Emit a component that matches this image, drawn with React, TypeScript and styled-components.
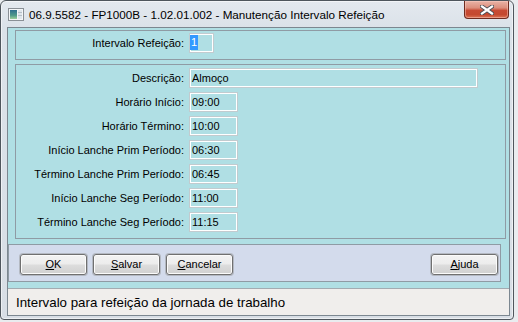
import React from "react";
import styled, { createGlobalStyle } from "styled-components";

const Global = createGlobalStyle`
  html, body { margin: 0; padding: 0; background: #e9ecef; }
  body { font-family: "Liberation Sans", Arial, sans-serif; }
  #root { width: 518px; height: 322px; }
`;

const Window = styled.div`
  box-sizing: border-box;
  width: 514px;
  height: 320px;
  border: 1px solid #4f565d;
  border-radius: 6px 6px 4px 4px;
  background: linear-gradient(180deg, #e4e9ef 0px, #dbe2e9 26px, #d8dee5 100%);
  box-shadow: inset 0 0 0 1px rgba(255, 255, 255, 0.55);
  display: flex;
  flex-direction: column;
  overflow: hidden;
`;

const TitleBar = styled.div`
  height: 26px;
  display: flex;
  align-items: center;
  padding-left: 7px;
  flex-shrink: 0;
`;

const TitleIcon = styled.svg`
  width: 16px;
  height: 13px;
  flex-shrink: 0;
`;

const TitleText = styled.span`
  margin-left: 5px;
  font-size: 11.7px;
  color: #000;
  white-space: nowrap;
`;

const CloseButton = styled.div`
  box-sizing: border-box;
  align-self: flex-start;
  margin-left: auto;
  margin-right: 4px;
  width: 45px;
  height: 18px;
  border: 1px solid #6e2b1f;
  border-top: none;
  border-radius: 0 0 4px 4px;
  background: linear-gradient(
    180deg,
    #e9b3a6 0%,
    #dc8f7d 40%,
    #c74a33 56%,
    #c4492f 80%,
    #dc7456 100%
  );
  box-shadow: inset 0 0 0 1px rgba(255, 210, 200, 0.45);
  display: flex;
  align-items: center;
  justify-content: center;
`;

const Client = styled.div`
  box-sizing: border-box;
  flex: 1;
  margin: 0 3px 3px 6px;
  border: 1px solid #7c8790;
  background: #b0dfe4;
  display: flex;
  flex-direction: column;
`;

const Panel = styled.div<{ $top: number; $height: number }>`
  box-sizing: border-box;
  margin: ${(p) => p.$top}px 3px 0 7px;
  height: ${(p) => p.$height}px;
  border: 1px solid #8f9ba4;
  display: grid;
  grid-template-columns: 168px auto;
  column-gap: 5px;
  row-gap: 4px;
  align-content: start;
`;

const TopPanel = styled(Panel)`
  padding: 2px 0 6px 0;
`;

const FieldsPanel = styled(Panel)`
  padding: 3px 0 6px 0;
`;

const Label = styled.div`
  font-size: 11px;
  line-height: 20px;
  height: 20px;
  color: #000;
  text-align: right;
  white-space: nowrap;
`;

const Field = styled.div<{ $width: number; $pad?: number }>`
  box-sizing: border-box;
  width: ${(p) => p.$width}px;
  height: 20px;
  border: 1px solid #c2cbcf;
  box-shadow: inset 0 0 0 1px #ffffff;
  padding-left: ${(p) => (p.$pad ?? 2)}px;
  font-size: 11px;
  line-height: 18px;
  color: #000;
  white-space: nowrap;
`;

const Selected = styled.span`
  display: inline-block;
  margin-top: 1px;
  padding: 0 1px;
  line-height: 15px;
  background: #3399ff;
  color: #fff;
  vertical-align: top;
`;

const ButtonBar = styled.div`
  box-sizing: border-box;
  margin: 5px 8px 0 0;
  height: 38px;
  border: 1px solid #8f9ba4;
  background: #d3dbec;
  display: flex;
  align-items: flex-start;
  gap: 6px;
  padding: 9px 2px 0 11px;
`;

const Button = styled.div<{ $right?: boolean }>`
  box-sizing: border-box;
  width: 67px;
  height: 21px;
  border: 1px solid #707070;
  border-radius: 3px;
  background: linear-gradient(180deg, #f3f3f3 0%, #ececec 48%, #dddddd 52%, #d0d0d0 100%);
  box-shadow: 0 0 0 1px #b4b9c2, inset 0 0 0 1px #fbfbfb;
  font-size: 11px;
  line-height: 19px;
  text-align: center;
  color: #000;
  margin-left: ${(p) => (p.$right ? "auto" : "0")};
  u { text-decoration: underline; text-underline-offset: 1px; }
`;

const StatusBar = styled.div`
  box-sizing: border-box;
  margin-top: 6px;
  flex: 1;
  border-top: 1px solid #a3abb1;
  background: #f0eeec;
  display: flex;
  align-items: center;
  padding-left: 8px;
  font-size: 13.3px;
  color: #000;
  white-space: nowrap;
`;

const rows: { label: string; value: string; width: number }[] = [
  { label: "Descrição:", value: "Almoço", width: 289 },
  { label: "Horário Início:", value: "09:00", width: 49 },
  { label: "Horário Término:", value: "10:00", width: 49 },
  { label: "Início Lanche Prim Período:", value: "06:30", width: 49 },
  { label: "Término Lanche Prim Período:", value: "06:45", width: 49 },
  { label: "Início Lanche Seg Período:", value: "11:00", width: 49 },
  { label: "Término Lanche Seg Período:", value: "11:15", width: 49 },
];

export default function App() {
  return (
    <>
      <Global />
      <Window>
        <TitleBar>
          <TitleIcon viewBox="0 0 16 13">
            <defs>
              <linearGradient id="ig" x1="0" y1="0" x2="0" y2="1">
                <stop offset="0" stopColor="#2f6f8f" />
                <stop offset="0.6" stopColor="#4f9a8a" />
                <stop offset="1" stopColor="#9ccf9a" />
              </linearGradient>
            </defs>
            <rect x="0.5" y="0.5" width="15" height="12" fill="#f4f6f8" stroke="#8a9096" />
            <rect x="2" y="2" width="7" height="9" fill="url(#ig)" />
            <rect x="10" y="2" width="4" height="9" fill="#dfe6ec" />
            <rect x="10" y="4" width="4" height="1" fill="#b7c0c8" />
            <rect x="10" y="7" width="4" height="1" fill="#b7c0c8" />
          </TitleIcon>
          <TitleText>06.9.5582 - FP1000B - 1.02.01.002 - Manutenção Intervalo Refeição</TitleText>
          <CloseButton>
            <svg width="14" height="10" viewBox="0 0 14 10">
              <path d="M2 1.5 L12 8.5 M12 1.5 L2 8.5" stroke="#4a4f55" strokeWidth="4" strokeLinecap="square" />
              <path d="M2 1.5 L12 8.5 M12 1.5 L2 8.5" stroke="#ffffff" strokeWidth="2.2" strokeLinecap="square" />
            </svg>
          </CloseButton>
        </TitleBar>
        <Client>
          <TopPanel $top={2} $height={30}>
            <Label>Intervalo Refeição:</Label>
            <Field $width={25} $pad={0}>
              <Selected>1</Selected>
            </Field>
          </TopPanel>
          <FieldsPanel $top={4} $height={175}>
            {rows.map((r) => (
              <React.Fragment key={r.label}>
                <Label>{r.label}</Label>
                <Field $width={r.width}>{r.value}</Field>
              </React.Fragment>
            ))}
          </FieldsPanel>
          <ButtonBar>
            <Button><u>O</u>K</Button>
            <Button><u>S</u>alvar</Button>
            <Button><u>C</u>ancelar</Button>
            <Button $right><u>A</u>juda</Button>
          </ButtonBar>
          <StatusBar>Intervalo para refeição da jornada de trabalho</StatusBar>
        </Client>
      </Window>
    </>
  );
}
